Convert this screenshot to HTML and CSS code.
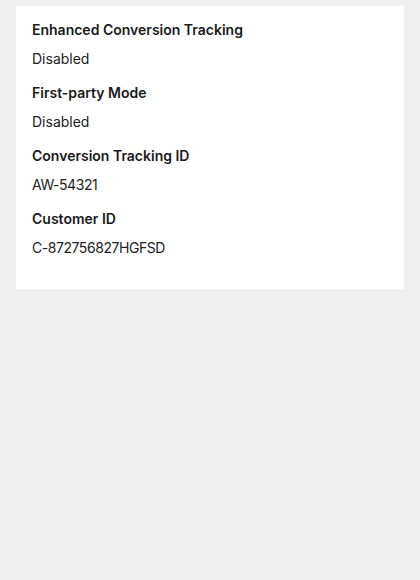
FILE: index.html
```html
<!DOCTYPE html>
<html lang="en">
<head>
<meta charset="utf-8">
<link rel="stylesheet" href="styles.css">
</head>
<body>
<section class="card">
  <dl class="details">
    <div class="item">
      <dt class="label">Enhanced Conversion Tracking</dt>
      <dd class="value">Disabled</dd>
    </div>
    <div class="item">
      <dt class="label">First-party Mode</dt>
      <dd class="value">Disabled</dd>
    </div>
    <div class="item">
      <dt class="label">Conversion Tracking ID</dt>
      <dd class="value value-code">AW-54321</dd>
    </div>
    <div class="item">
      <dt class="label">Customer ID</dt>
      <dd class="value value-code">C-872756827HGFSD</dd>
    </div>
  </dl>
</section>
</body>
</html>
```

FILE: styles.css
```css
html, body {
  margin: 0;
  padding: 0;
  background: #efefef;
  font-family: Inter, "Noto Sans", sans-serif;
  color: #1f1f1f;
}

body {
  padding: 6px 16px;
}

.card {
  background: #ffffff;
  padding: 14px 16px 31px;
}

.details {
  margin: 0;
  display: flex;
  flex-direction: column;
  gap: 14px;
}

.item {
  display: flex;
  flex-direction: column;
  gap: 9px;
}

.label {
  margin: 0;
  font-size: 14px;
  line-height: 20px;
  font-weight: 600;
  color: #1a1a1a;
}

.value {
  margin: 0;
  font-size: 14px;
  line-height: 20px;
  font-weight: 400;
  color: #222222;
}

.value-code {
  letter-spacing: -0.45px;
}
```
